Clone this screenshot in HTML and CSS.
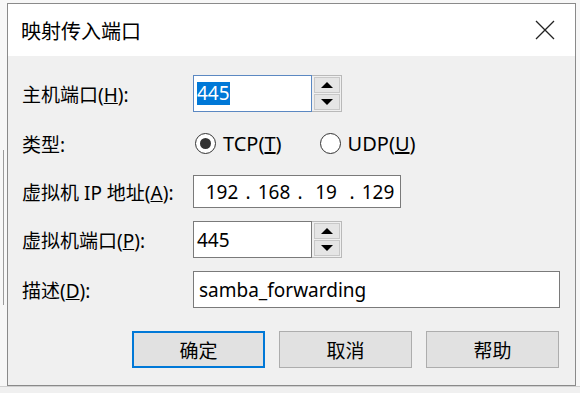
FILE: index.html
```html
<!DOCTYPE html>
<html lang="zh-CN">
<head>
  <meta charset="UTF-8">
  <title>映射传入端口</title>
  <link rel="stylesheet" href="styles.css">
</head>
<body>
  <div class="backWindow">
    <div class="backPanel"></div>
  </div>

  <div class="dialog">
    <div class="titleBar">
      <span class="title">映射传入端口</span>
      <svg class="closeIcon" width="20" height="20" viewBox="0 0 20 20">
        <path d="M1 1 L19 19 M19 1 L1 19" stroke="#222" stroke-width="1.3" fill="none"/>
      </svg>
    </div>

    <div class="dialogBody">
      <div class="form">
        <label class="fieldLabel">主机端口(<u>H</u>):</label>
        <div class="spin">
          <div class="textBox focused"><span class="selected">445</span></div>
          <div class="spinButtons">
            <div class="spinBtn"><span class="arrowUp"></span></div>
            <div class="spinBtn"><span class="arrowDown"></span></div>
          </div>
        </div>

        <label class="fieldLabel">类型:</label>
        <div class="radios">
          <span class="radio"><span class="radioCircle checked"></span><span class="radioText">TCP(<u>T</u>)</span></span>
          <span class="radio"><span class="radioCircle"></span><span class="radioText">UDP(<u>U</u>)</span></span>
        </div>

        <label class="fieldLabel">虚拟机 IP 地址(<u>A</u>):</label>
        <div class="textBox ipBox">
          <span class="octet">192</span><span class="dot">.</span>
          <span class="octet">168</span><span class="dot">.</span>
          <span class="octet">19</span><span class="dot">.</span>
          <span class="octet">129</span>
        </div>

        <label class="fieldLabel">虚拟机端口(<u>P</u>):</label>
        <div class="spin">
          <div class="textBox">445</div>
          <div class="spinButtons">
            <div class="spinBtn"><span class="arrowUp"></span></div>
            <div class="spinBtn"><span class="arrowDown"></span></div>
          </div>
        </div>

        <label class="fieldLabel">描述(<u>D</u>):</label>
        <div class="textBox descBox">samba_forwarding</div>
      </div>

      <div class="buttons">
        <button class="btn default">确定</button>
        <button class="btn">取消</button>
        <button class="btn">帮助</button>
      </div>
    </div>
  </div>
</body>
</html>
```

FILE: styles.css
```css
body {
  margin: 0;
  width: 580px;
  height: 393px;
  overflow: hidden;
  position: relative;
  background-color: #f0f0f0;
  font-family: "Noto Sans", "Noto Sans CJK SC", sans-serif;
  font-size: 19px;
  color: #000;
}

/* window behind the dialog, only its edge shows */
.backWindow {
  position: absolute;
  left: 0;
  top: 0;
  width: 580px;
  height: 386px;
  background-color: #f7f7f7;
  border-bottom: 1px solid #d0d0d0;
}

.backPanel {
  margin-top: 150px;
  width: 3px;
  height: 155px;
  border-right: 1px solid #9a9a9a;
}

.dialog {
  position: absolute;
  left: 7px;
  top: 3px;
  width: 567px;
  height: 381px;
  border: 1px solid #8a8a8a;
  background-color: #f0f0f0;
  display: flex;
  flex-direction: column;
}

.titleBar {
  height: 52px;
  background-color: #fff;
  display: flex;
  align-items: center;
  justify-content: space-between;
  padding: 0 20px 0 13px;
}

.title {
  font-size: 20px;
}

.closeIcon {
  display: block;
}

.dialogBody {
  padding: 19px 16px 0 14px;
  display: flex;
  flex-direction: column;
}

.form {
  display: grid;
  grid-template-columns: 171px 1fr;
  grid-template-rows: 37px 37px 33px 37px 37px;
  row-gap: 13px;
  align-items: center;
}

.fieldLabel {
  white-space: nowrap;
}

.textBox {
  box-sizing: border-box;
  height: 37px;
  background-color: #fff;
  border: 1px solid #7a7a7a;
  display: flex;
  align-items: center;
  padding-left: 3px;
  white-space: nowrap;
}

.textBox.focused {
  border-color: #5b88c2;
}

.selected {
  background-color: #0078d7;
  color: #fff;
  line-height: 23px;
}

.spin {
  display: flex;
  height: 37px;
}

.spin .textBox {
  width: 119px;
}

.spinButtons {
  width: 30px;
  box-sizing: border-box;
  border: 1px solid #b9b9b9;
  border-left: none;
  background-color: #f0f0f0;
  display: flex;
  flex-direction: column;
  padding: 1px 1px 1px 2px;
  gap: 1px;
}

.spinBtn {
  flex: 1;
  background-color: #e5e5e5;
  border: 1px solid #c8c8c8;
  display: flex;
  align-items: center;
  justify-content: center;
}

.arrowUp {
  width: 0;
  height: 0;
  border-left: 6px solid transparent;
  border-right: 6px solid transparent;
  border-bottom: 6px solid #000;
}

.arrowDown {
  width: 0;
  height: 0;
  border-left: 6px solid transparent;
  border-right: 6px solid transparent;
  border-top: 6px solid #000;
}

.radios {
  display: flex;
  gap: 38px;
  align-items: center;
  padding-left: 2px;
}

.radio {
  display: flex;
  align-items: center;
  gap: 7px;
}

.radioText {
  font-size: 20px;
}

.radioCircle {
  width: 21px;
  height: 21px;
  box-sizing: border-box;
  border: 1px solid #333;
  border-radius: 50%;
  background-color: #fff;
  display: flex;
  align-items: center;
  justify-content: center;
}

.radioCircle.checked::after {
  content: "";
  width: 11px;
  height: 11px;
  border-radius: 50%;
  background-color: #333;
}

.ipBox {
  width: 208px;
  height: 33px;
  padding-left: 6px;
}

.octet {
  width: 44px;
  text-align: center;
}

.dot {
  width: 8px;
  text-align: center;
}

.descBox {
  width: 367px;
  padding-left: 5px;
}

.buttons {
  display: flex;
  justify-content: flex-end;
  gap: 14px;
  margin-top: 23px;
}

.btn {
  width: 133px;
  height: 37px;
  box-sizing: border-box;
  background-color: #e1e1e1;
  border: 1px solid #adadad;
  font-family: "Noto Sans CJK SC", sans-serif;
  font-size: 19px;
  color: #000;
  padding: 0;
}

.btn.default {
  border: 2px solid #0078d7;
}
```
